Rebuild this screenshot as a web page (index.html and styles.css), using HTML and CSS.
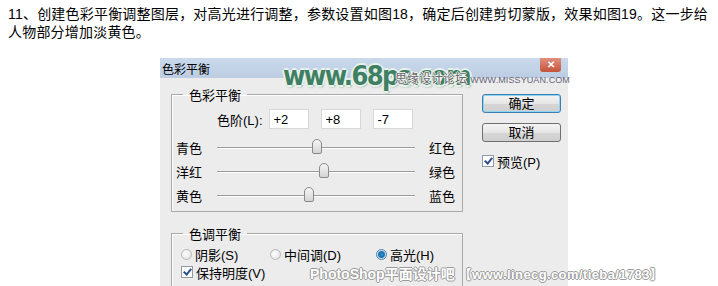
FILE: index.html
```html
<!DOCTYPE html>
<html lang="zh-CN">
<head>
  <meta charset="UTF-8">
  <title>色彩平衡</title>
  <link rel="stylesheet" href="styles.css">
</head>
<body>
  <p class="intro">11、创建色彩平衡调整图层，对高光进行调整，参数设置如图18，确定后创建剪切蒙版，效果如图19。这一步给人物部分增加淡黄色。</p>

  <div class="dialog">
    <div class="titlebar">
      <span class="title">色彩平衡</span>
      <span class="close">✕</span>
    </div>
    <div class="body">
      <div class="groups">
        <fieldset class="group">
          <legend>色彩平衡</legend>
          <div class="levels">
            <span class="levels-label">色阶(L):</span>
            <input type="text" value="+2">
            <input type="text" value="+8">
            <input type="text" value="-7">
          </div>
          <div class="slider-row">
            <span class="left">青色</span>
            <div class="track"><span class="thumb" style="left: 50.5%"></span></div>
            <span class="right">红色</span>
          </div>
          <div class="slider-row">
            <span class="left">洋红</span>
            <div class="track"><span class="thumb" style="left: 54%"></span></div>
            <span class="right">绿色</span>
          </div>
          <div class="slider-row">
            <span class="left">黄色</span>
            <div class="track"><span class="thumb" style="left: 46.5%"></span></div>
            <span class="right">蓝色</span>
          </div>
        </fieldset>

        <fieldset class="group tone">
          <legend>色调平衡</legend>
          <div class="radios">
            <label class="opt"><span class="radio"></span>阴影(S)</label>
            <label class="opt"><span class="radio"></span>中间调(D)</label>
            <label class="opt"><span class="radio on"></span>高光(H)</label>
          </div>
          <label class="opt"><span class="check"></span>保持明度(V)</label>
        </fieldset>
      </div>

      <div class="buttons">
        <button class="btn default">确定</button>
        <button class="btn">取消</button>
        <label class="opt preview"><span class="check"></span>预览(P)</label>
      </div>
    </div>

    <div class="mark-68ps">www.68ps.com</div>
    <div class="mark-missyuan">思缘设计论坛 <small>WWW.MISSYUAN.COM</small></div>
    <div class="mark-linecg">PhotoShop平面设计吧 <span class="url">【www.linecg.com/tieba/1783】</span></div>
  </div>
</body>
</html>
```

FILE: styles.css
```css
body {
  margin: 0;
  padding: 0;
  background-color: #fff;
  font-family: "Liberation Sans", "Noto Sans CJK SC", sans-serif;
  color: #000;
  height: 286px;
  overflow: hidden;
}
.intro {
  margin: 0;
  padding: 5px 6px 0 8px;
  font-size: 14px;
  line-height: 18px;
  letter-spacing: 0.2px;
}
.dialog {
  position: relative;
  width: 408px;
  margin: 17px 0 0 160px;
  height: 229px;
  background-color: #ececec;
  font-size: 12px;
}
.titlebar {
  height: 20px;
  background: linear-gradient(#cad9ec, #bccde3);
  display: flex;
  align-items: center;
  padding-left: 2px;
}
.title {
  font-size: 12px;
}
.close {
  margin-left: auto;
  margin-right: 7px;
  margin-top: -6px;
  width: 21px;
  height: 14px;
  background: linear-gradient(#e0907e, #c4533c);
  border-radius: 0 0 3px 3px;
  color: #fff;
  font-size: 10px;
  font-weight: bold;
  text-align: center;
  line-height: 14px;
}
.body {
  display: flex;
  height: 209px;
  box-sizing: border-box;
  overflow: hidden;
  padding: 7px 0 0 11px;
}
.groups {
  width: 292px;
}
.group {
  margin: 0;
  padding: 5px 0 4px 4px;
  border: 1px solid #a9a9a9;
  box-shadow: inset 1px 1px 0 #fff;
}
.group legend {
  padding: 0 6px;
  margin-left: 7px;
  font-size: 13px;
}
.levels {
  display: flex;
  align-items: center;
  gap: 8px;
  padding-left: 41px;
  margin-bottom: 6px;
}
.levels-label {
  margin-right: -2px;
  font-size: 13px;
}
.levels input {
  width: 40px;
  height: 20px;
  box-sizing: border-box;
  border: 1px solid #d8d8d8;
  background: #fff;
  font-family: inherit;
  font-size: 13px;
  padding: 0 4px;
  margin-right: 4px;
}
.slider-row {
  display: flex;
  align-items: center;
  height: 24px;
  font-size: 13px;
}
.slider-row .left {
  width: 41px;
}
.slider-row .right {
  margin-left: 14px;
}
.track {
  position: relative;
  width: 198px;
  height: 1px;
  background-color: #9c9c9c;
  box-shadow: 0 1px 0 #fff;
}
.thumb {
  position: absolute;
  top: -8px;
  margin-left: -5px;
  width: 10px;
  height: 15px;
  box-sizing: border-box;
  border: 1px solid #8a8a8a;
  border-radius: 5px 5px 2px 2px;
  background: linear-gradient(#f6f6f6, #d4d4d4);
}
.tone {
  margin-top: 12px;
  height: 80px;
  padding-top: 2px;
}
.radios {
  display: flex;
}
.radios .opt:nth-child(1) { width: 84px; }
.radios .opt:nth-child(2) { width: 101px; }
.opt {
  display: flex;
  align-items: center;
  font-size: 13px;
  height: 18px;
  padding-left: 5px;
}
.radio {
  width: 9px;
  height: 9px;
  border-radius: 50%;
  border: 1px solid #b7b7b7;
  background: radial-gradient(circle at 40% 40%, #fff, #dcdcdc);
  margin-right: 3px;
}
.radio.on {
  border-color: #4d7fa6;
  background: radial-gradient(circle, #2a8fd6 0, #1c6ea8 3px, #cfe4f3 4px, #eaf3f9 100%);
}
.check {
  width: 10px;
  height: 10px;
  border: 1px solid #8f9aa6;
  background: #fff;
  margin-right: 3px;
  position: relative;
}
.check::after {
  content: "";
  position: absolute;
  left: 3px;
  top: 0;
  width: 3px;
  height: 6px;
  border: solid #2a4f8c;
  border-width: 0 2px 2px 0;
  transform: rotate(40deg);
}
.buttons {
  display: flex;
  flex-direction: column;
  gap: 10px;
  padding: 9px 0 0 19px;
}
.btn {
  width: 79px;
  height: 19px;
  border: 1px solid #707070;
  border-radius: 3px;
  background: linear-gradient(#f4f4f4 0, #e6e6e6 50%, #d6d6d6 51%, #cfcfcf 100%);
  font-family: inherit;
  font-size: 13px;
  padding: 0;
  line-height: 16px;
}
.btn.default {
  border-color: #3c7fb1;
  box-shadow: inset 0 0 0 1px #8ed3f2;
}
.preview {
  padding-left: 0;
}
.mark-68ps {
  position: absolute;
  left: 123px;
  top: 2px;
  font-family: "DejaVu Sans Condensed", "DejaVu Sans", sans-serif;
  font-stretch: condensed;
  font-size: 27px;
  font-weight: bold;
  letter-spacing: -1.6px;
  color: #3f7f63;
  text-shadow: -2px 0 0 #e8f1ea, 2px 0 0 #e8f1ea, 0 -2px 0 #e8f1ea, 0 2px 0 #e8f1ea, 1px 2px 2px #7a9;
}
.mark-missyuan {
  position: absolute;
  left: 235px;
  top: 11px;
  font-size: 12px;
  color: #666;
  white-space: nowrap;
  text-shadow: -1px 0 0 #f4f4f4, 1px 0 0 #f4f4f4, 0 -1px 0 #f4f4f4, 0 1px 0 #f4f4f4;
}
.mark-missyuan small {
  font-size: 9px;
  letter-spacing: 0.1px;
  color: #667;
  text-shadow: none;
}
.mark-linecg {
  position: absolute;
  left: 150px;
  top: 205px;
  white-space: nowrap;
  font-size: 14px;
  font-weight: bold;
  color: #fff;
  text-shadow: -1px 0 0 #999, 1px 0 0 #999, 0 -1px 0 #999, 0 1px 0 #999;
}
.mark-linecg .url {
  font-size: 13px;
  letter-spacing: 0.4px;
}
```
